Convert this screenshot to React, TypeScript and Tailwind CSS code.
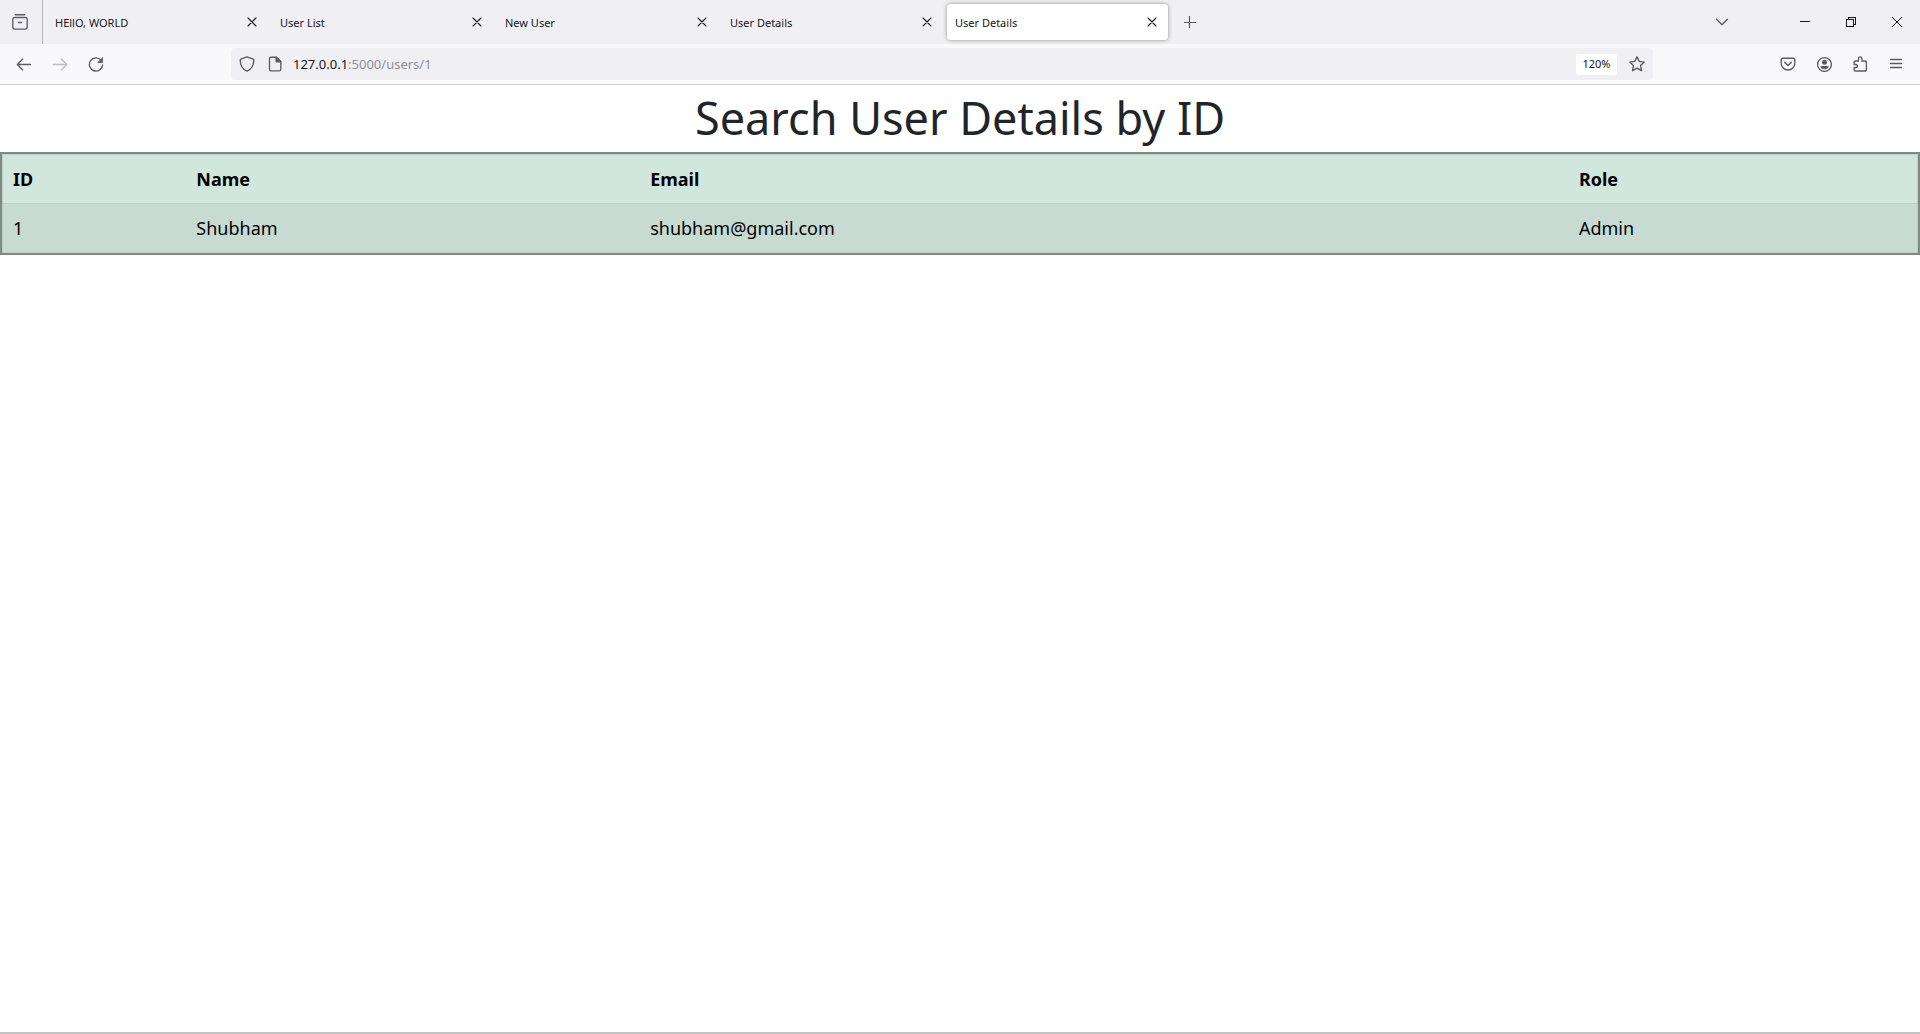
import React from "react";

type IconProps = { children: React.ReactNode; className?: string };

function Icon({ children, className = "" }: IconProps) {
  return (
    <svg
      aria-hidden="true"
      viewBox="0 0 16 16"
      className={`size-4 shrink-0 ${className}`}
      fill="none"
      stroke="currentColor"
      strokeWidth="1.35"
      strokeLinecap="round"
      strokeLinejoin="round"
    >
      {children}
    </svg>
  );
}

function ToolButton({ label, disabled, children }: { label: string; disabled?: boolean; children: React.ReactNode }) {
  return (
    <button
      type="button"
      aria-label={label}
      disabled={disabled}
      className="flex h-8 w-9 items-center justify-center rounded text-[#5b5b66] disabled:text-[#bdbdc2]"
    >
      {children}
    </button>
  );
}

function WindowButton({ label, children }: { label: string; children: React.ReactNode }) {
  return (
    <button type="button" aria-label={label} className="flex h-11 w-[46px] items-center justify-center text-[#15141a]">
      <svg aria-hidden="true" viewBox="0 0 10 10" className="size-[10px]" fill="none" stroke="currentColor" shapeRendering="crispEdges">
        {children}
      </svg>
    </button>
  );
}

const tabs = ["HEllO, WORLD", "User List", "New User", "User Details", "User Details"];
const activeTab = 4;

function Tab({ title, active }: { title: string; active: boolean }) {
  return (
    <div
      className={
        active
          ? "flex h-9 w-[221px] items-center rounded bg-white pr-2 pl-2 shadow-[0_0_4px_rgba(0,0,0,0.4)]"
          : "flex h-9 w-[221px] items-center rounded pr-2 pl-2"
      }
    >
      <button type="button" role="tab" aria-selected={active} className="h-9 min-w-0 flex-1 truncate pt-0.5 text-left text-[11px] text-[#15141a]">
        {title}
      </button>
      <button type="button" aria-label={`Close ${title}`} className="flex size-4 items-center justify-center text-[#15141a]">
        <svg aria-hidden="true" viewBox="0 0 8 8" className="size-2 overflow-visible" fill="none" stroke="currentColor" strokeWidth="1.1" strokeLinecap="round">
          <path d="M0 0l8 8M8 0L0 8" />
        </svg>
      </button>
    </div>
  );
}

function TabStrip() {
  return (
    <div className="flex h-11 items-center bg-[#f0f0f4]">
      <div className="flex h-11 w-[43px] shrink-0 items-center justify-center border-r border-[#b5b5ba] pr-0.5">
        <button type="button" aria-label="View recent browsing" className="text-[#5b5b66]">
          <Icon>
            <path d="M3.2 .7h9.6M2.800 3.500h10.400a2 2 0 0 1 2 2v7.600a2 2 0 0 1-2 2H2.800a2 2 0 0 1-2-2V5.500a2 2 0 0 1 2-2zM6.500 8.500h3" />
          </Icon>
        </button>
      </div>
      <div role="tablist" className="flex gap-1 pl-1">
        {tabs.map((title, i) => (
          <Tab key={i} title={title} active={i === activeTab} />
        ))}
      </div>
      <button type="button" aria-label="New tab" className="ml-1 flex size-9 items-center justify-center text-[#5b5b66]">
        <svg aria-hidden="true" viewBox="0 0 12 12" className="size-3" fill="none" stroke="currentColor" strokeWidth="1.2">
          <path d="M5.500 0v12M0 6.500h12" />
        </svg>
      </button>
      <div className="ml-auto flex items-center">
        <button type="button" aria-label="List all tabs" className="mr-[42px] flex h-9 w-9 items-center justify-center text-[#5b5b66]">
          <Icon>
            <path d="M2.500 5.300L8 10.800l5.500-5.500" />
          </Icon>
        </button>
        <WindowButton label="Minimize">
          <path d="M0 4.500h10" />
        </WindowButton>
        <WindowButton label="Restore">
          <path d="M.5 2.500h7v7h-7zM2.500 2.500v-2h7v7h-2" />
        </WindowButton>
        <WindowButton label="Close">
          <path d="M0 0l10 10M10 0L0 10" shapeRendering="auto" />
        </WindowButton>
      </div>
    </div>
  );
}

function NavBar() {
  return (
    <div className="flex h-[41px] items-center border-b border-[#cccccf] bg-[#f9f9fb] px-1.5">
      <div className="flex">
        <ToolButton label="Back">
          <Icon>
            <path d="M1.300 8.500h13.300M6.800 3.100L1.300 8.500l5.500 5.400" />
          </Icon>
        </ToolButton>
        <ToolButton label="Forward" disabled>
          <Icon>
            <path d="M14.700 8.500H1.400M9.200 3.100l5.500 5.400-5.500 5.400" />
          </Icon>
        </ToolButton>
        <ToolButton label="Reload">
          <Icon>
            <path d="M13.100 4.300A6.600 6.600 0 1 0 14.600 8.900" />
            <path d="M14.600 1.900v4.600H10z" fill="currentColor" strokeWidth=".8" />
          </Icon>
        </ToolButton>
      </div>
      <div className="flex-[117]" />
      <div className="flex h-8 flex-[1406] items-center rounded bg-[#f0f0f4] px-2 text-[#5b5b66]">
        <button type="button" aria-label="Tracking protection" className="flex">
          <Icon>
            <path d="M8 .8l6.200 2.400c.5.2.6.5.6.9 0 4.700-1.800 9-6.800 11.100C3 13.100 1.200 8.800 1.200 4.100c0-.4.1-.7.6-.9z" />
          </Icon>
        </button>
        <button type="button" aria-label="Site information" className="ml-3 flex">
          <Icon>
            <path d="M4 1.200h5.500l4.300 4.300v7.800a1.500 1.500 0 0 1-1.500 1.500H4a1.500 1.500 0 0 1-1.500-1.500V2.700A1.500 1.500 0 0 1 4 1.200z" />
            <path d="M9.200 1.200v4.600h4.600z" fill="currentColor" />
          </Icon>
        </button>
        <div role="textbox" aria-label="Address" tabIndex={0} className="ml-2.5 flex-1 pt-0.5 text-[13px] text-[#8f8f97]">
          <span className="text-[#15141a]">127.0.0.1</span>:5000/users/1
        </div>
        <button type="button" aria-label="Reset zoom level" className="mr-3 h-[21px] w-[41px] rounded-[3px] bg-white text-[11px] text-[#15141a]">
          120%
        </button>
        <button type="button" aria-label="Bookmark this page" className="flex">
          <Icon>
            <path d="M8 .8l2.200 4.600 5 .7-3.600 3.500.9 5L8 12.200l-4.500 2.400.9-5L.8 6.100l5-.7z" />
          </Icon>
        </button>
      </div>
      <div className="flex-[117]" />
      <div className="flex">
        <ToolButton label="Save to Pocket">
          <Icon>
            <path d="M2.600 2.200h10.800a1.400 1.400 0 0 1 1.400 1.400v3.600a6.800 6.800 0 0 1-13.600 0V3.600a1.400 1.400 0 0 1 1.400-1.400zM4.600 6.300L8 9.600l3.400-3.300" />
          </Icon>
        </ToolButton>
        <ToolButton label="Account">
          <Icon>
            <circle cx="8.500" cy="8.500" r="6.900" />
            <circle cx="8.500" cy="6.300" r="2.500" fill="currentColor" stroke="none" />
            <path d="M4.500 9.900h8c0 2.100-1.800 3.300-4 3.300s-4-1.200-4-3.300z" fill="currentColor" stroke="none" />
          </Icon>
        </ToolButton>
        <ToolButton label="Extensions">
          <Icon>
            <path d="M3.300 5h3.200V2.600a1.700 1.700 0 0 1 3.400 0V5h3.300a1.200 1.200 0 0 1 1.200 1.200v7.600a1.200 1.200 0 0 1-1.200 1.200H3.300a1.200 1.200 0 0 1-1.200-1.200v-2.300h1.800a1.500 1.500 0 0 0 0-3H2.100V6.200A1.200 1.200 0 0 1 3.300 5z" />
          </Icon>
        </ToolButton>
        <ToolButton label="Open application menu">
          <Icon>
            <path d="M2.500 3.500h11M2.500 7.500h11M2.500 11.500h11" />
          </Icon>
        </ToolButton>
      </div>
    </div>
  );
}

const users = [{ id: 1, name: "Shubham", email: "shubham@gmail.com", role: "Admin" }];

function UserTable() {
  return (
    <div className="border-2 border-[#7d8b85]">
      <table className="w-full table-fixed border border-[#bcd0c7] text-left text-[18px] leading-[29px] text-black">
        <thead className="bg-[#d1e7dd]">
          <tr className="border-b border-[#bcd0c7]">
            <th className="w-[9.6%] px-2.5 pt-2.5 pb-[9px] font-bold">ID</th>
            <th className="w-[23.7%] px-2.5 pt-2.5 pb-[9px] font-bold">Name</th>
            <th className="w-[48.5%] px-2.5 pt-2.5 pb-[9px] font-bold">Email</th>
            <th className="px-2.5 pt-2.5 pb-[9px] font-bold">Role</th>
          </tr>
        </thead>
        <tbody className="bg-[#c7dbd2]">
          {users.map((u) => (
            <tr key={u.id}>
              <td className="px-2.5 pt-2.5 pb-[9px]">{u.id}</td>
              <td className="px-2.5 pt-2.5 pb-[9px]">{u.name}</td>
              <td className="px-2.5 pt-2.5 pb-[9px]">{u.email}</td>
              <td className="px-2.5 pt-2.5 pb-[9px]">{u.role}</td>
            </tr>
          ))}
        </tbody>
      </table>
    </div>
  );
}

export default function App() {
  return (
    <div className="flex min-h-screen flex-col border-b-2 border-[#c4c2c1] bg-white font-['Noto_Sans',sans-serif]">
      <header>
        <TabStrip />
        <NavBar />
      </header>
      <main>
        <h1 className="pt-1 pb-[5px] text-center text-[45px] leading-[58px] text-[#212529]">Search User Details by ID</h1>
        <UserTable />
      </main>
    </div>
  );
}
